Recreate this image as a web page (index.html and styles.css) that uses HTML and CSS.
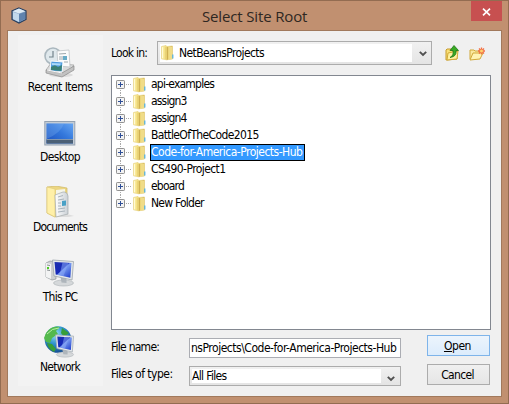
FILE: index.html
```html
<!DOCTYPE html>
<html lang="en">
<head>
<meta charset="utf-8">
<title>Select Site Root</title>
<link rel="stylesheet" href="styles.css">
</head>
<body>
<svg class="defs" width="0" height="0" aria-hidden="true">
  <defs>
    <linearGradient id="gold" x1="0" x2="1"><stop offset="0" stop-color="#fff3ad"/><stop offset=".55" stop-color="#f0d973"/><stop offset="1" stop-color="#cfaa3d"/></linearGradient>
    <linearGradient id="screen" x1="0" y1="0" x2="1" y2="1"><stop offset="0" stop-color="#1d2fae"/><stop offset=".45" stop-color="#1529b8"/><stop offset=".5" stop-color="#789bf0"/><stop offset="1" stop-color="#1735c9"/></linearGradient>
    <linearGradient id="desk" x1="0" y1="1" x2="1" y2="0"><stop offset="0" stop-color="#1b50bd"/><stop offset=".55" stop-color="#3478dc"/><stop offset="1" stop-color="#65a5f2"/></linearGradient>
    <radialGradient id="globe" cx=".4" cy=".3" r=".7"><stop offset="0" stop-color="#9be5f5"/><stop offset=".5" stop-color="#3195cf"/><stop offset="1" stop-color="#144e94"/></radialGradient>
    <linearGradient id="leaf" x1="0" x2="1"><stop offset="0" stop-color="#fff"/><stop offset="1" stop-color="#cbd1d6"/></linearGradient>
    <symbol id="folder" viewBox="0 0 13 16">
      <path d="M.5 1.500 5 .5l1 1 5.500-.5v13l-6 .8-5-1z" fill="url(#gold)" stroke="#e6d384" stroke-width=".7"/>
      <path d="M5.600 2H7v12.500l-1.400.6z" fill="#cfb052"/>
      <path d="M3.800 2.400 5.600 1.500V15l-1.800-1z" fill="#ead376"/>
      <path d="M7.500 2H11v12l-3.500.4z" fill="#f0dc88"/>
      <path d="M11.200 9.500h1.200v4h-1.200z" fill="#4bafe5"/>
      <path d="M1.500 2.200v11" stroke="#fffbd7"/>
    </symbol>
    <symbol id="plus" viewBox="0 0 9 9">
      <rect x=".5" y=".5" width="8" height="8" rx=".7" fill="#f3f3f3" stroke="#929292"/>
      <path d="M2 4.500h5M4.500 2v5" stroke="#2f4f97"/>
    </symbol>
    <symbol id="monitor" viewBox="0 0 24 28">
      <ellipse cx="12" cy="24" rx="10" ry="3" fill="#d5d8da" stroke="#aab0b4" stroke-width=".6"/>
      <path d="m9 18 6 1v5l-5-.5z" fill="#aeb5bb"/>
      <path d="m1 1 21 1.500-1.500 18.500L2.500 17z" fill="#e4e8eb" stroke="#9ca4ab" stroke-width=".8"/>
      <path d="m3 3 17 1-1.200 14.800L4.200 15.500z" fill="url(#screen)"/>
      <path d="m11 3.400 6 .5-5 13.100-4-.8z" fill="#88a8f5" opacity=".55"/>
    </symbol>
  </defs>
</svg>
<div class="window">
  <header class="titlebar">
    <svg class="app-icon" viewBox="0 0 16 17"><path d="m8 1 7 3v8.500L8 16l-7-3.500V4z" fill="#89a7c9" stroke="#253e60" stroke-width="1.200"/><path d="m1.500 4.300 6.500-2.800 6.500 2.800L8 6.500z" fill="#dce9f3"/><path d="M2 5l6 2v8l-6-3z" fill="#c2d8eb"/><path d="m8 7 6-2v7l-6 3z" fill="#6083ae"/></svg>
    <h1 class="title"><span>Select Site Root</span></h1>
    <button class="close" aria-label="Close"><svg viewBox="0 0 9 8"><path d="m1 .7 7 6.600M8 .7 1 7.300" stroke="#fff" stroke-width="1.700"/></svg></button>
  </header>
  <main class="content">
    <nav class="places">
      <a class="place"><svg viewBox="0 0 32 32">
        <ellipse cx="17" cy="29" rx="12" ry="2" fill="#ddd"/>
        <circle cx="9" cy="10" r="8" fill="#dfe8ec" stroke="#aab7be" stroke-width="1.600"/><path d="M9 5v6H5" fill="none" stroke="#73838c" stroke-width="1.200"/>
        <path d="m2 24 5-7 23 2-7 9z" fill="#d9dada" stroke="#a0a0a0" stroke-width=".7"/>
        <path d="m13 5 12-1 1 17-12-1z" fill="#fbfbfb" stroke="#b8bdc0" stroke-width=".7"/><path d="m15 8 7-.5M15 11h4M15 13h4M20 16h4" stroke="#9da8ad"/><path d="M19 10h4v4h-4z" fill="#67abc7"/>
        <path d="m7 15 12 1-1 10-12-1z" fill="#4f9ce0" stroke="#f8fbfd"/><path d="m7 21 4-2 3 2 4-2-.5 6L7 24z" fill="#3a8177"/><path d="m8 17 9 .5-1 2-8-.5z" fill="#a9d9fa"/>
        <path d="m2 24 16 3 12-7v4l-12 7-16-4z" fill="#c2c2c2" stroke="#8b8b8b" stroke-width=".7"/><path d="m3 24 15 3" stroke="#f8f8f8"/>
      </svg><span class="recent">Recent Items</span></a>
      <a class="place"><svg viewBox="0 0 32 32"><rect x=".8" y="5.500" width="30" height="23.500" fill="#c3ccd5" stroke="#94a2b1"/><rect x="2.500" y="7.500" width="26.500" height="20" fill="url(#desk)"/><path d="M2.500 7.500H20Q17 17 2.500 23z" fill="#89b9f4" opacity=".28"/><path d="M2.500 23.500H29v4H2.500z" fill="#4b6076"/><path d="M2.500 23.500H29" stroke="#8598ac"/></svg><span class="desktop">Desktop</span></a>
      <a class="place"><svg viewBox="0 0 32 32">
        <path d="m11 29 12-1 7 2-6 1H12z" fill="#ddd"/><path d="m3 1 9-1 11 2v25l-12 4-8-4z" fill="#ecd682" stroke="#cfb764" stroke-width=".7"/><path d="m3 1 8 2v28l-8-4z" fill="#fff0a8" stroke="#e0cc7b" stroke-width=".7"/>
        <path d="m12 4 9-1v23l-9 3z" fill="#f5f5e9"/><path d="m13 9 7-1" stroke="#4a9c91"/><path d="m11 9 8-3q4-.5 5 4v18l-12 3z" fill="url(#leaf)" stroke="#a3aaae" stroke-width=".7"/><path d="m14 11 5-1.500M14 14l6-1M14 17h3M14 20h3M14 23l7-1M14 26l7-1" stroke="#aab4bb"/><path d="m18 15 4-.5v5l-4 .5z" fill="#49a1c6"/>
      </svg><span class="documents">Documents</span></a>
      <a class="place"><svg viewBox="0 0 32 32"><path d="m2 7 4-2 6 1v17l-4 1-6-3z" fill="#cdd0d2" stroke="#8f9599" stroke-width=".7"/><path d="m2 7 5 1v15l-5-2z" fill="#f2f3f3"/><path d="m3 9 3 .5M3 14l3 .5" stroke="#8a9093"/><path d="M3 11h2v2H3z" fill="#4dcc24"/><use href="#monitor" x="7.500" y="3" width="24" height="28"/></svg><span class="pc">This PC</span></a>
      <a class="place"><svg viewBox="0 0 32 32"><circle cx="14" cy="13.500" r="13.300" fill="url(#globe)"/><path d="M2 7q6-8 14-6l-4 4 2 3-6 4-2 5-4-1-2-4z" fill="#54b94c"/><path d="m18 2 7 5-5 4-3-4zM3 17l5 1 4 5-2 3q-6-3-7-9z" fill="#389e38"/><path d="M3 8Q8 2 15 2" fill="none" stroke="#b8efa6"/><use href="#monitor" x="10.500" y="8" width="21" height="24"/></svg><span class="network">Network</span></a>
    </nav>
    <section class="browser">
      <div class="lookin">
        <label><span class="lookin-label">Look in:</span></label>
        <div class="combo combo-path"><div class="value"><svg class="folder"><use href="#folder"/></svg><span class="netbeans">NetBeansProjects</span></div><svg class="arrow" viewBox="0 0 8 6"><path d="m.8.8 3.200 3.200L7.200.8" fill="none" stroke="#505050" stroke-width="1.900"/></svg></div>
        <svg class="tool up" viewBox="0 0 15 16"><path d="m1 5 1-1h4l1 2h5v8L2 15H1z" fill="#f9df77" stroke="#c69b2d"/><path d="m3 8 10-2-1 8-10 1z" fill="#fff1a0" stroke="#d2aa37"/><path d="M5 12.500q4-2 3-7H5l4-5 4.500 5H11q1 6-6 7z" fill="#39aa25" stroke="#207716" stroke-width=".8"/></svg>
        <svg class="tool new" viewBox="0 0 17 14"><path d="M1 12V3h4l1 1h5v3" fill="#fae9a0" stroke="#d1a939"/><path d="m1 13 3-7h10l-3 6z" fill="#fff3b2" stroke="#d1a939"/><path d="M12.500.5v7M9 4h7M10 1.500l5 5m0-5-5 5" stroke="#f36d43" stroke-width="1.300"/><circle cx="12.500" cy="4" r="1.500" fill="#ffd36c"/></svg>
      </div>
      <ul class="tree">
        <li><svg class="plus"><use href="#plus"/></svg><i></i><svg class="folder"><use href="#folder"/></svg><span class="t1">api-examples</span></li>
        <li><svg class="plus"><use href="#plus"/></svg><i></i><svg class="folder"><use href="#folder"/></svg><span class="t2">assign3</span></li>
        <li><svg class="plus"><use href="#plus"/></svg><i></i><svg class="folder"><use href="#folder"/></svg><span class="t2">assign4</span></li>
        <li><svg class="plus"><use href="#plus"/></svg><i></i><svg class="folder"><use href="#folder"/></svg><span class="t4">BattleOfTheCode2015</span></li>
        <li><svg class="plus"><use href="#plus"/></svg><i></i><svg class="folder"><use href="#folder"/></svg><span class="selected">Code-for-America-Projects-Hub</span></li>
        <li><svg class="plus"><use href="#plus"/></svg><i></i><svg class="folder"><use href="#folder"/></svg><span class="t6">CS490-Project1</span></li>
        <li><svg class="plus"><use href="#plus"/></svg><i></i><svg class="folder"><use href="#folder"/></svg><span class="t7">eboard</span></li>
        <li><svg class="plus"><use href="#plus"/></svg><i></i><svg class="folder"><use href="#folder"/></svg><span class="t8">New Folder</span></li>
      </ul>
      <div class="form">
        <div class="fields">
          <label class="name-label"><span>File name:</span></label><div class="input"><span>nsProjects\Code-for-America-Projects-Hub</span></div>
          <label class="type-label"><span>Files of type:</span></label><div class="combo combo-type"><div class="value"><span class="all">All Files</span></div><svg class="arrow" viewBox="0 0 8 6"><path d="m.8.8 3.200 3.200L7.200.8" fill="none" stroke="#505050" stroke-width="1.900"/></svg></div>
        </div>
        <div class="actions"><button class="btn primary"><span><u>O</u>pen</span></button><button class="btn cancel"><span>Cancel</span></button></div>
      </div>
    </section>
  </main>
</div>
</body>
</html>
```
FILE: styles.css
```css
* { box-sizing: border-box; }
body { margin: 0; font: 12px/17px "DejaVu Sans Condensed", "DejaVu Sans", sans-serif; font-stretch: condensed; color: #000; letter-spacing: -0.45px; overflow: hidden; }
.defs { position: absolute; }
svg { display: block; flex: none; }
span { white-space: nowrap; }
button { font: inherit; letter-spacing: inherit; padding: 0; color: inherit; }
.window { width: 509px; height: 404px; border: 1px solid #936c51; background: #c19070; padding: 0 6px 6px; }
.titlebar { height: 29px; display: flex; }
.app-icon { width: 16px; height: 17px; margin: 6px 0 0 4px; }
.title { flex: 1; margin: 0 0 0 4px; padding-left: 171px; font: 15px/30px "Open Sans", sans-serif; letter-spacing: -0.15px; color: #2e2722; }
.close { width: 31px; height: 20px; border: 0; background: #c75050; display: flex; align-items: center; justify-content: center; }
.close svg { width: 9px; height: 8px; margin-top: 1px; }
.content { height: 367px; border: 1px solid #a1795c; background: #f0f0f0; display: flex; padding: 4px 9px 9px 10px; }
.places { width: 85px; height: 351px; background: #f3f3f3; margin-right: 8px; padding-top: 11px; flex: none; }
.place { height: 70px; display: flex; flex-direction: column; align-items: center; }
.place svg { width: 32px; height: 32px; margin-left: -1px; }
.place span { margin-top: 1px; margin-left: -1px; }
.recent { letter-spacing: -0.53px; }
.desktop { letter-spacing: -0.65px; }
.documents { letter-spacing: -0.85px; }
.pc { letter-spacing: -0.7px; }
.network { letter-spacing: -0.7px; }
.browser { width: 380px; flex: none; }
.lookin { display: flex; height: 40px; padding-top: 6px; }
.lookin label { width: 46px; flex: none; padding-top: 4px; letter-spacing: -0.75px; }
.combo { display: flex; border: 1px solid #acacac; background: linear-gradient(#f1f1f1, #e4e4e4); }
.combo .value { background: #fff; display: flex; align-items: center; }
.combo-path { width: 275px; height: 24px; padding: 2px; flex: none; }
.combo-path .value { width: 252px; }
.combo-path .folder { margin: 0 5px 0 1px; }
.netbeans { letter-spacing: -0.6px; }
.combo .arrow { width: 8px; height: 6px; margin: 7px 0 0 7px; }
.folder { width: 13px; height: 16px; }
.tool.up { width: 15px; height: 16px; margin: 4px 0 0 13px; }
.tool.new { width: 17px; height: 14px; margin: 6px 0 0 9px; }
.tree { list-style: none; margin: 0; height: 255px; border: 1px solid #828790; background: #fff; padding: 0 0 0 4px; }
.tree li { height: 17px; display: flex; align-items: center; background: repeating-linear-gradient(#aaa 0 1px, #fff 1px 2px) 4px 0 / 1px 17px no-repeat; }
.tree li:first-child { background-position: 4px 8px; }
.tree li:last-child { background-size: 1px 8px; }
.plus { width: 9px; height: 9px; }
.tree i { width: 6px; height: 1px; background: repeating-linear-gradient(90deg, #aaa 0 1px, #fff 1px 2px); margin: 0 1px; }
.tree .folder { margin-right: 4px; }
.tree span { height: 17px; border: 1px solid transparent; line-height: 15px; }
.t1 { letter-spacing: -0.78px; }
.t2 { letter-spacing: -0.83px; }
.t4 { letter-spacing: -0.63px; }
.t6 { letter-spacing: -0.58px; }
.t7 { letter-spacing: -0.8px; }
.t8 { letter-spacing: -0.75px; }
.tree .selected { border-color: #000; background: #39f; color: #fff; width: 155px; letter-spacing: -0.5px; }
.form { display: flex; padding-top: 5px; }
.fields { display: grid; grid-template-columns: 78px 212px; grid-template-rows: 31px 21px; width: 316px; flex: none; }
.name-label { padding-top: 4px; letter-spacing: -0.75px; }
.type-label { letter-spacing: -0.5px; }
.input { height: 20px; margin-top: 3px; border: 1px solid #abadb3; background: #fff; line-height: 18px; padding-left: 1px; overflow: hidden; letter-spacing: -0.48px; }
.combo-type { height: 20px; padding: 2px; }
.combo-type .value { width: 189px; height: 14px; }
.all { letter-spacing: -0.65px; }
.fields .combo-type .arrow { margin: 7px 0 0 6px; }
.actions { display: flex; flex-direction: column; gap: 8px; }
.btn { width: 63px; height: 21px; border: 1px solid #acacac; background: linear-gradient(#f0f0f0, #e5e5e5); line-height: 18px; }
.btn span { margin-left: -2px; }
.btn.primary { border-color: #7eb4ea; background: linear-gradient(#ecf4fc, #dcecfc); }
.cancel { letter-spacing: -0.65px; }
```
